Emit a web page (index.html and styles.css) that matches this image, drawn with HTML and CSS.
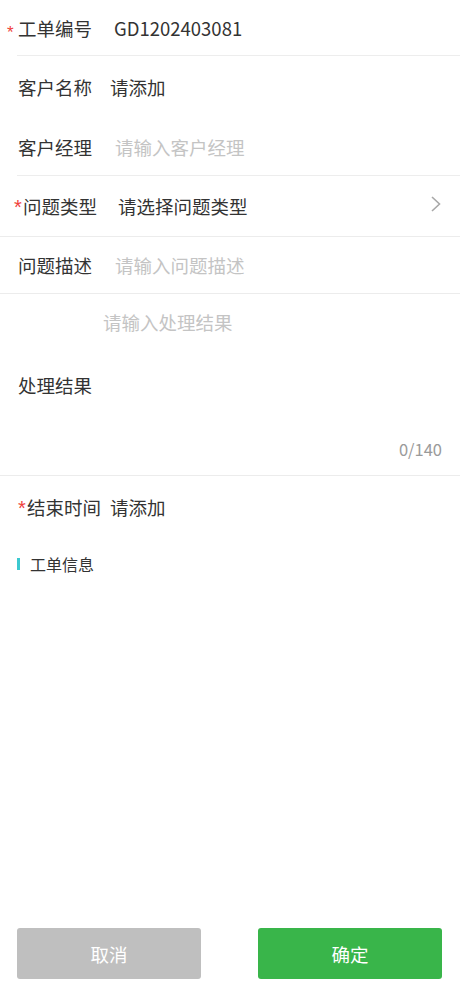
FILE: index.html
```html
<!DOCTYPE html>
<html lang="zh-CN">
<head>
<meta charset="utf-8">
<title>工单</title>
<link rel="stylesheet" href="styles.css">
</head>
<body>
<div class="page">
  <div class="form">
    <div class="row row-1 line-inset">
      <span class="star star-sm">*</span><span class="label">工单编号</span><span class="value gap-22">GD1202403081</span>
    </div>
    <div class="row row-2">
      <span class="label">客户名称</span><span class="value gap-18">请添加</span>
    </div>
    <div class="row row-3 line-inset">
      <span class="label">客户经理</span><span class="value placeholder gap-23">请输入客户经理</span>
    </div>
    <div class="row row-4 line-full">
      <span class="star star-4">*</span><span class="label">问题类型</span><span class="value gap-21">请选择问题类型</span>
      <svg class="chevron" width="12" height="18" viewBox="0 0 12 18"><path d="M2 2 L9.5 9 L2 16" fill="none" stroke="#a8a8a8" stroke-width="1.6"/></svg>
    </div>
    <div class="row row-5 line-full">
      <span class="label">问题描述</span><span class="value placeholder gap-23">请输入问题描述</span>
    </div>
    <div class="textarea-row line-full">
      <span class="label ta-label">处理结果</span>
      <div class="ta-box">
        <span class="placeholder ta-ph">请输入处理结果</span>
        <span class="counter">0/140</span>
      </div>
    </div>
    <div class="row row-end">
      <span class="star star-end">*</span><span class="label">结束时间</span><span class="value gap-9">请添加</span>
    </div>
    <div class="section-title"><span class="bar"></span><span>工单信息</span></div>
  </div>
  <div class="footer">
    <button class="btn btn-cancel">取消</button>
    <button class="btn btn-ok">确定</button>
  </div>
</div>
</body>
</html>
```
FILE: styles.css
```css
* { box-sizing: border-box; }
html, body { margin: 0; padding: 0; background: #fff; }
body {
  font-family: "PingFang SC", "Noto Sans CJK SC", "Noto Sans", sans-serif;
  color: #333;
}
.page {
  height: 997px;
  display: flex;
  flex-direction: column;
}
.form { display: flex; flex-direction: column; }
.row {
  display: flex;
  align-items: center;
  padding-left: 18px;
  padding-right: 16px;
  font-size: 18.5px;
  line-height: 26px;
  position: relative;
}
.row-1 { height: 56px; padding-left: 7px; }
.row-2 { height: 62px; }
.row-3 { height: 58px; }
.row-4 { height: 61px; padding-left: 14px; }
.row-5 { height: 57px; }
.row-end { height: 62px; padding-left: 18px; }
.line-inset::after {
  content: "";
  position: absolute;
  left: 17px; right: 0; bottom: 0;
  height: 1px;
  background: #ededed;
}
.line-full { border-bottom: 1px solid #ececec; }
.label { white-space: nowrap; color: #333; }
.value { color: #333; white-space: nowrap; }
.placeholder { color: #c4c4c4; }
.gap-22 { margin-left: 22px; }
.gap-18 { margin-left: 18px; }
.gap-23 { margin-left: 23px; }
.gap-21 { margin-left: 21px; }
.gap-9 { margin-left: 9px; }
.star { color: #f0413c; font-size: 20px; line-height: 1; font-family: "Liberation Sans", sans-serif; }
.star-sm { width: 11px; font-size: 17px; position: relative; top: 4px; }
.star-4 { width: 9px; position: relative; top: 1px; }
.star-end { width: 9px; position: relative; top: 1px; }
.chevron { margin-left: auto; margin-right: 2px; position: relative; top: -2px; }
.textarea-row {
  height: 182px;
  display: flex;
  align-items: center;
  padding-left: 18px;
  font-size: 18.5px;
  line-height: 26px;
}
.ta-box {
  margin-left: 11px;
  align-self: stretch;
  flex: 1;
  display: flex;
  flex-direction: column;
  justify-content: space-between;
  padding-top: 15px;
  padding-bottom: 14px;
  padding-right: 18px;
}
.counter {
  align-self: flex-end;
  font-size: 16.5px;
  color: #9a9a9a;
  line-height: 24px;
}
.section-title {
  display: flex;
  align-items: center;
  padding-left: 17px;
  margin-top: 15px;
  font-size: 16px;
  line-height: 22px;
  color: #333;
}
.bar {
  width: 3px;
  height: 12px;
  background: #3cc9d0;
  margin-right: 10px;
}
.footer {
  margin-top: auto;
  display: flex;
  justify-content: space-between;
  padding: 0 18px 18px 17px;
}
.btn {
  width: 184px;
  height: 51px;
  border: none;
  border-radius: 3px;
  color: #fff;
  font-family: inherit;
  font-size: 18.5px;
  padding: 0;
}
.btn-cancel { background: #bfbfbf; }
.btn-ok { background: #39b54a; }
```
